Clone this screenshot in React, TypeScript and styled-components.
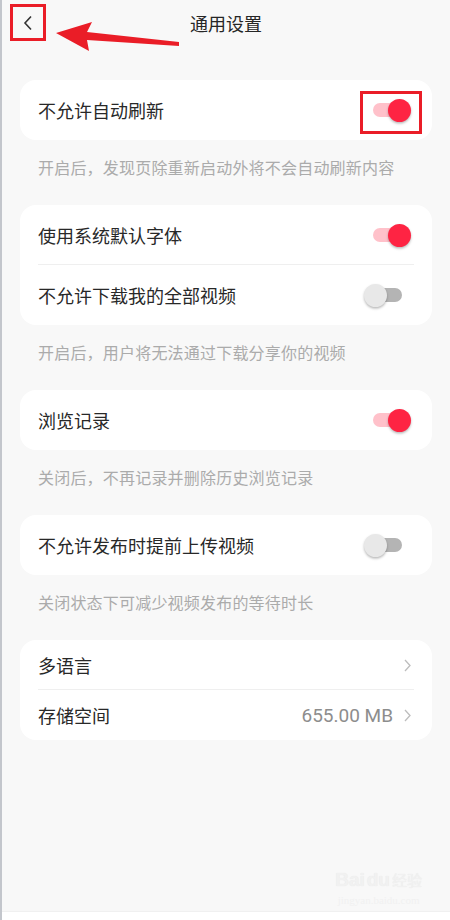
import React from 'react';
import styled, { createGlobalStyle } from 'styled-components';

const GlobalStyle = createGlobalStyle`
  html, body {
    margin: 0;
    padding: 0;
    background: #f8f8f8;
  }
  body {
    font-family: Roboto, "Noto Sans CJK SC", "Noto Sans", sans-serif;
  }
`;

const Page = styled.div`
  position: relative;
  width: 450px;
  min-height: 920px;
  box-sizing: border-box;
  border-left: 2px solid #c3c6cc;
  background: #f8f8f8;
  display: flex;
  flex-direction: column;
  overflow: hidden;
`;

const Header = styled.header`
  position: relative;
  height: 48px;
  display: grid;
  grid-template-columns: 1fr auto 1fr;
  align-items: center;
`;

const BackButton = styled.div`
  position: relative;
  width: 30px;
  height: 31px;
  margin-left: 8px;
  margin-top: -3px;
  border: 3px solid #ea1d27;
  display: flex;
  align-items: center;
  justify-content: center;
`;

const Title = styled.h1`
  margin: 0;
  font-size: 18px;
  font-weight: 400;
  color: #262626;
  font-family: "Noto Sans CJK SC", sans-serif;
  transform: translateY(-1px);
`;

const PointerArrow = styled.svg`
  position: absolute;
  left: 52px;
  top: 18px;
  width: 130px;
  height: 36px;
`;

const Content = styled.main`
  flex: 1;
  padding: 32px 18px 0 18px;
`;

const Group = styled.section`
  display: flex;
  flex-direction: column;
`;

const Card = styled.div`
  background: #ffffff;
  border-radius: 16px;
  overflow: hidden;
`;

const Row = styled.div<{ $divider?: boolean; $compact?: boolean }>`
  position: relative;
  height: ${({ $compact }) => ($compact ? '50px' : '60px')};
  display: flex;
  align-items: center;
  padding: 0 21px 0 18px;

  ${({ $divider }) =>
    $divider &&
    `
    &::after {
      content: '';
      position: absolute;
      left: 18px;
      right: 18px;
      bottom: 0;
      height: 1px;
      background: #efefef;
    }
  `}
`;

const Label = styled.span`
  flex: 1;
  font-size: 18px;
  color: #282828;
  font-family: "Noto Sans CJK SC", sans-serif;
`;

const Value = styled.span`
  font-size: 19px;
  color: #8d8d8d;
  font-family: Roboto, "Noto Sans", sans-serif;
  margin-right: 11px;
`;

const Caption = styled.p`
  margin: 0;
  padding: 17px 18px 28px 18px;
  font-size: 16px;
  line-height: 20px;
  letter-spacing: 0.2px;
  color: #ababab;
  font-family: "Noto Sans CJK SC", sans-serif;
`;

const SwitchBox = styled.div`
  position: relative;
  width: 47px;
  height: 23px;
  flex-shrink: 0;
`;

const Track = styled.span<{ $on: boolean }>`
  position: absolute;
  left: 9px;
  top: 4.5px;
  width: 29px;
  height: 14px;
  border-radius: 7px;
  background: ${({ $on }) => ($on ? '#ffc1ca' : '#b4b4b4')};
`;

const Thumb = styled.span<{ $on: boolean }>`
  position: absolute;
  top: 0;
  left: ${({ $on }) => ($on ? '24px' : '0')};
  width: 23px;
  height: 23px;
  border-radius: 50%;
  background: ${({ $on }) => ($on ? '#fe2443' : '#e8e8e8')};
  box-shadow: 0 1.5px 2.5px rgba(0, 0, 0, 0.28);
`;

const Highlight = styled.span`
  position: absolute;
  left: -4px;
  right: -11px;
  top: -8px;
  bottom: -12px;
  border: 3px solid #ea1d27;
  pointer-events: none;
`;

const Chevron = styled.svg`
  width: 7px;
  height: 13px;
  flex-shrink: 0;
`;

const Footer = styled.footer`
  position: relative;
  height: 8px;
  background: #ffffff;
  box-shadow: 0 -1px 1px rgba(0, 0, 0, 0.03);
`;

const Watermark = styled.div`
  position: absolute;
  right: 28px;
  bottom: 14px;
  display: flex;
  flex-direction: column;
  align-items: center;
  color: #f1f1f1;
  pointer-events: none;
`;

const WatermarkLogo = styled.div`
  display: flex;
  align-items: flex-end;
  gap: 2px;
  font-family: "Liberation Sans", sans-serif;
  font-size: 19px;
  font-weight: 700;
  line-height: 20px;
  text-shadow: 0 0 1px #e6e6e6;
`;

const WatermarkCn = styled.span`
  font-family: "Noto Sans CJK SC", sans-serif;
  font-size: 15px;
  font-weight: 400;
`;

const WatermarkUrl = styled.span`
  font-family: "Liberation Serif", serif;
  font-size: 11px;
  margin-top: 4px;
`;

function Switch({ on, highlighted }: { on: boolean; highlighted?: boolean }) {
  return (
    <SwitchBox>
      <Track $on={on} />
      <Thumb $on={on} />
      {highlighted && <Highlight />}
    </SwitchBox>
  );
}

function Arrow() {
  return (
    <Chevron viewBox="0 0 7 13">
      <path d="M1 1l5 5.5L1 12" fill="none" stroke="#bdbdbd" strokeWidth="1.3" />
    </Chevron>
  );
}

export default function App() {
  return (
    <>
      <GlobalStyle />
      <Page>
        <Header>
          <div>
            <BackButton>
              <svg width="10" height="16" viewBox="0 0 10 16">
                <path d="M8 1.5L2 8l6 6.5" fill="none" stroke="#333" strokeWidth="1.6" />
              </svg>
            </BackButton>
          </div>
          <Title>通用设置</Title>
          <div />
          <PointerArrow viewBox="0 0 130 36">
            <polygon
              points="2,15 38,4 33,14 125,24 125,28 33,22 35,33"
              fill="#ea1d27"
            />
          </PointerArrow>
        </Header>

        <Content>
          <Group>
            <Card>
              <Row>
                <Label>不允许自动刷新</Label>
                <Switch on highlighted />
              </Row>
            </Card>
            <Caption>开启后，发现页除重新启动外将不会自动刷新内容</Caption>
          </Group>

          <Group>
            <Card>
              <Row $divider>
                <Label>使用系统默认字体</Label>
                <Switch on />
              </Row>
              <Row>
                <Label>不允许下载我的全部视频</Label>
                <Switch on={false} />
              </Row>
            </Card>
            <Caption>开启后，用户将无法通过下载分享你的视频</Caption>
          </Group>

          <Group>
            <Card>
              <Row>
                <Label>浏览记录</Label>
                <Switch on />
              </Row>
            </Card>
            <Caption>关闭后，不再记录并删除历史浏览记录</Caption>
          </Group>

          <Group>
            <Card>
              <Row>
                <Label>不允许发布时提前上传视频</Label>
                <Switch on={false} />
              </Row>
            </Card>
            <Caption>关闭状态下可减少视频发布的等待时长</Caption>
          </Group>

          <Group>
            <Card>
              <Row $divider $compact>
                <Label>多语言</Label>
                <Arrow />
              </Row>
              <Row $compact>
                <Label>存储空间</Label>
                <Value>655.00 MB</Value>
                <Arrow />
              </Row>
            </Card>
          </Group>
        </Content>

        <Watermark>
          <WatermarkLogo>
            Bai<span>du</span>
            <WatermarkCn>经验</WatermarkCn>
          </WatermarkLogo>
          <WatermarkUrl>jingyan.baidu.com</WatermarkUrl>
        </Watermark>
        <Footer />
      </Page>
    </>
  );
}
